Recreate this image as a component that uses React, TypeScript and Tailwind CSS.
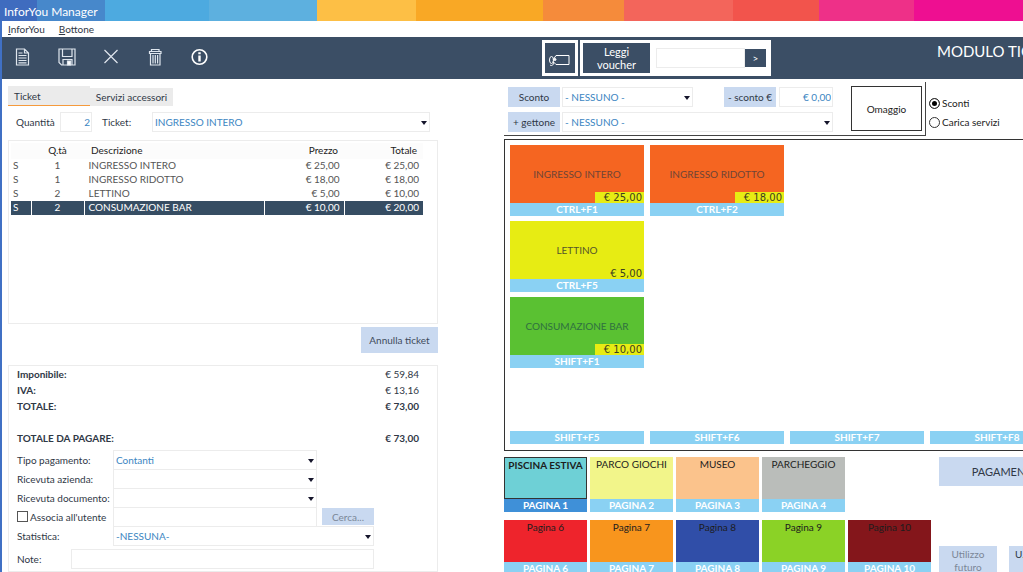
import { ReactNode } from "react";
import clsx from "clsx";

const stripes = [
    "grow-37 bg-[#3f6cbf]",
    "grow-68 bg-[#4788cb]",
    "grow-104 bg-[#4daae0]",
    "grow-108 bg-[#5db0df]",
    "grow-99 bg-[#fdbf45]",
    "grow-127 bg-[#f9a825]",
    "grow-81 bg-[#f58b3b]",
    "grow-109 bg-[#f3655b]",
    "grow-86 bg-[#f2544c]",
    "grow-95 bg-[#ee3088]",
    "grow-109 bg-[#ee0f91]",
];

const rows = [
    { qty: 1, name: "INGRESSO INTERO", price: "€ 25,00", total: "€ 25,00" },
    { qty: 1, name: "INGRESSO RIDOTTO", price: "€ 18,00", total: "€ 18,00" },
    { qty: 2, name: "LETTINO", price: "€ 5,00", total: "€ 10,00" },
    { qty: 2, name: "CONSUMAZIONE BAR", price: "€ 10,00", total: "€ 20,00", selected: true },
];

const totals = [
    { label: "Imponibile:", value: "€ 59,84" },
    { label: "IVA:", value: "€ 13,16" },
    { label: "TOTALE:", value: "€ 73,00", bold: true },
    { label: "TOTALE DA PAGARE:", value: "€ 73,00", bold: true, last: true },
];

type Tile = { name?: string; price?: string; keys: string; color?: string; text?: string };

const tiles: (Tile | null)[] = [
    { name: "INGRESSO INTERO", price: "€ 25,00", keys: "CTRL+F1", color: "bg-[#f56521]", text: "text-[#6f4436]" },
    { name: "INGRESSO RIDOTTO", price: "€ 18,00", keys: "CTRL+F2", color: "bg-[#f56521]", text: "text-[#6f4436]" },
    null,
    null,
    { name: "LETTINO", price: "€ 5,00", keys: "CTRL+F5", color: "bg-[#e7ec13]", text: "text-[#55552a]" },
    null,
    null,
    null,
    { name: "CONSUMAZIONE BAR", price: "€ 10,00", keys: "SHIFT+F1", color: "bg-[#5ac132]", text: "text-[#2f7040]" },
    null,
    null,
    null,
    { keys: "SHIFT+F5" },
    { keys: "SHIFT+F6" },
    { keys: "SHIFT+F7" },
    { keys: "SHIFT+F8" },
];

const pages = [
    [
        { name: "PISCINA ESTIVA", label: "PAGINA 1", color: "bg-[#6ed0d6]", active: true },
        { name: "PARCO GIOCHI", label: "PAGINA 2", color: "bg-[#f2f58a]" },
        { name: "MUSEO", label: "PAGINA 3", color: "bg-[#fbc38c]" },
        { name: "PARCHEGGIO", label: "PAGINA 4", color: "bg-[#babdba]" },
    ],
    [
        { name: "Pagina 6", label: "PAGINA 6", color: "bg-[#ee242c]" },
        { name: "Pagina 7", label: "PAGINA 7", color: "bg-[#f8951d]" },
        { name: "Pagina 8", label: "PAGINA 8", color: "bg-[#304ea8]" },
        { name: "Pagina 9", label: "PAGINA 9", color: "bg-[#8bd226]" },
        { name: "Pagina 10", label: "PAGINA 10", color: "bg-[#84161b]" },
    ],
];

const SelectBox = ({ id, label, value, className }: { id: string; label?: string; value?: string; className?: string }) => (
    <div className={clsx("relative h-5 border border-[#ececec]", className)}>
        <select
            id={id}
            aria-label={label}
            className="block h-full w-full appearance-none bg-transparent pl-0.5 text-[#3c86c2] outline-none"
        >
            <option>{value}</option>
        </select>
        <svg viewBox="0 0 6 4" className="pointer-events-none absolute right-0.5 top-2 h-1 w-1.5 fill-[#15152b]">
            <path d="M0 0h6L3 4z" />
        </svg>
    </div>
);

const ToolButton = ({ label, children }: { label: string; children: ReactNode }) => (
    <button aria-label={label} className="flex h-5 w-5 items-center justify-center">
        <svg viewBox="0 0 20 20" className="h-5 w-5 fill-none stroke-[#dfe6ee]" strokeWidth="1.2">
            {children}
        </svg>
    </button>
);

const Toolbar = () => (
    <div className="flex h-[42px] shrink-0 items-center bg-[#3b4e65] text-white">
        <div className="flex w-[540px] shrink-0 gap-6 pb-0.5 pl-[11px]">
            <ToolButton label="Nuovo">
                <path d="M3.500 2h8l4 4v12h-12zM11.500 2v4h4M5.500 6h4M5.500 8.500h8M5.500 11h8M5.500 13.500h8M5.500 15.800h8" />
            </ToolButton>
            <ToolButton label="Salva">
                <path d="M2 2h16v16H4.500L2 15.500zM5.500 2v7.500h9.500V2M6 18v-5.500h9V18" />
                <path d="M10.500 14h3v4h-3z" fill="#fff" />
            </ToolButton>
            <ToolButton label="Elimina">
                <path d="M3.500 3l13 13M16.500 3l-13 13" />
            </ToolButton>
            <ToolButton label="Cestino">
                <path d="M4.500 4.500h11.500v2H4.500zM6.500 4.500v-2h7.500v2M5.500 6.500v11.500h9.500V6.500M8 8v8.500M10.300 8v8.500M12.600 8v8.500" />
            </ToolButton>
            <ToolButton label="Informazioni">
                <circle cx="10.500" cy="10" r="7.300" stroke="#fff" strokeWidth="1.600" />
                <path d="M10.500 8.500v6M10.500 5.200v2" stroke="#fff" strokeWidth="2.400" />
            </ToolButton>
        </div>
        <button aria-label="Tessera" className="mr-0.5 flex h-9 w-9 shrink-0 items-center justify-center border-[3px] border-white bg-[#3b4e65]">
            <svg viewBox="0 0 24 20" className="h-5 w-6 fill-none stroke-white" strokeWidth="1">
                <path d="M8 7.500h13v9H8l-3-3M8 7.500L5 12" />
                <ellipse cx="3.500" cy="12" rx="2" ry="3.500" />
                <path d="M2 17c2 1.500 4-.5 3.500-3" />
                <circle cx="7" cy="11.500" r="1" fill="#fff" />
            </svg>
        </button>
        <div className="flex h-9 shrink-0 items-center bg-white px-[3px]">
            <button className="h-[30px] w-[67px] bg-[#3b4e65] text-[11px] leading-[13px]">
                Leggi
                <br />
                voucher
            </button>
            <input aria-label="Codice voucher" className="ml-1.5 h-5 w-[89px] border border-[#ececec]" />
            <button className="mr-0.5 h-[18px] w-[21px] bg-[#3b4e65]">&gt;</button>
        </div>
        <h1 className="ml-auto -mr-[60px] h-8 w-[146px] shrink-0 whitespace-nowrap text-[15px] leading-[18px]">MODULO TICKET</h1>
    </div>
);

const TicketTable = () => (
    <div className="mt-2 h-[184px] border border-[#ececec] px-0.5 pt-0.5">
        <table className="w-[412px] table-fixed border-collapse leading-3">
            <thead>
                <tr className="h-4 bg-[#fcfcfc] text-[#222]">
                    <th className="w-5" aria-label="Stato" />
                    <th className="w-[53px] pb-0.5 font-normal">Q.tà</th>
                    <th className="w-[180px] pb-0.5 pl-[7px] text-left font-normal">Descrizione</th>
                    <th className="w-20 pr-1.5 pb-0.5 text-right font-normal">Prezzo</th>
                    <th className="pr-1.5 pb-0.5 text-right font-normal">Totale</th>
                </tr>
            </thead>
            <tbody>
                {rows.map((row) => (
                    <tr key={row.name} className={clsx("h-3.5", row.selected ? "bg-[#364d63] text-white" : "text-[#555]")}>
                        <td className="border-r border-white pb-0.5 pl-0.5">S</td>
                        <td className="border-r border-white pb-0.5 text-center">{row.qty}</td>
                        <td className="border-r border-white pb-0.5 pl-1">{row.name}</td>
                        <td className="border-r border-white pr-1 pb-0.5 text-right">{row.price}</td>
                        <td className="pr-1 pb-0.5 text-right">{row.total}</td>
                    </tr>
                ))}
            </tbody>
        </table>
    </div>
);

const PaymentPanel = () => (
    <section className="mt-3 flex-1 border border-[#ececec] pl-2">
        <dl className="pr-[18px]">
            {totals.map((item) => (
                <div key={item.label} className={clsx("flex h-4 items-center justify-between", item.last && "mt-4")}>
                    <dt className="font-bold">{item.label}</dt>
                    <dd className={clsx(item.bold && "font-bold")}>{item.value}</dd>
                </div>
            ))}
        </dl>
        <div className="mt-1 grid auto-rows-[19px] grid-cols-[96px_204px_57px] items-center">
            <label htmlFor="payment">Tipo pagamento:</label>
            <SelectBox id="payment" value="Contanti" />
            <span />
            <label htmlFor="company">Ricevuta azienda:</label>
            <SelectBox id="company" />
            <span />
            <label htmlFor="document" className="whitespace-nowrap">Ricevuta documento:</label>
            <SelectBox id="document" />
            <span />
            <label className="flex items-center gap-0.5 whitespace-nowrap">
                <input type="checkbox" className="h-[11px] w-[11px] shrink-0 appearance-none border border-[#555]" />
                Associa all'utente
            </label>
            <input aria-label="Utente" className="h-5 border border-[#ececec]" />
            <button className="ml-[5px] h-[17px] w-[52px] bg-[#c9d9f0] text-[#7b8797]">Cerca...</button>
            <label htmlFor="stats">Statistica:</label>
            <SelectBox id="stats" value="-NESSUNA-" className="col-span-2" />
        </div>
        <div className="mt-1 flex items-center">
            <label htmlFor="notes" className="w-[54px]">Note:</label>
            <input id="notes" className="h-5 w-[303px] border border-[#ececec]" />
        </div>
    </section>
);

const TicketColumn = () => (
    <section className="flex w-[430px] shrink-0 flex-col pt-[7px]">
        <div role="tablist" className="flex h-5 items-end">
            <button role="tab" aria-selected="true" className="h-5 w-[82px] border-b border-b-[#f59a3c] bg-[#ebebeb] pl-1.5 text-left">
                Ticket
            </button>
            <button role="tab" aria-selected="false" className="h-[18px] w-[83px] bg-[#ebebeb]">
                Servizi accessori
            </button>
        </div>
        <div className="mt-1.5 flex items-center">
            <label htmlFor="qty" className="w-[52px] pl-2">Quantità</label>
            <input id="qty" defaultValue="2" className="h-5 w-8 border border-[#ececec] pr-px text-right text-[#3c86c2]" />
            <label htmlFor="ticket" className="w-[60px] pl-2.5">Ticket:</label>
            <SelectBox id="ticket" value="INGRESSO INTERO" className="w-[278px]" />
        </div>
        <TicketTable />
        <button className="mt-[3px] h-[26px] w-[77px] self-end bg-[#c9d9f0] text-[#3f4b5c]">Annulla ticket</button>
        <PaymentPanel />
    </section>
);

const DiscountBar = () => (
    <div className="flex">
        <div className="mt-[3px] flex h-[54px] w-[422px] shrink-0 justify-between border-r border-b border-[#444] pt-1 pr-[3px] pl-1">
            <div className="mt-px flex flex-col gap-[5px]">
                <div className="flex">
                    <button className="h-5 w-[52px] bg-[#c9d9f0]">Sconto</button>
                    <SelectBox id="discount" label="Sconto" value="- NESSUNO -" className="ml-0.5 w-[131px]" />
                    <button className="ml-[31px] h-5 w-[52px] bg-[#c9d9f0]">- sconto €</button>
                    <input aria-label="Sconto in euro" defaultValue="€ 0,00" className="ml-[3px] h-5 w-[54px] border border-[#ececec] pr-px text-right text-[#3c86c2]" />
                </div>
                <div className="flex">
                    <button className="h-5 w-[52px] bg-[#c9d9f0]">+ gettone</button>
                    <SelectBox id="token" label="Gettone" value="- NESSUNO -" className="ml-0.5 w-[271px]" />
                </div>
            </div>
            <button className="h-[45px] w-[71px] border border-[#333] text-[#222]">Omaggio</button>
        </div>
        <fieldset className="flex flex-col gap-[3px] pt-4 pl-[3px] text-[#222]">
            {["Sconti", "Carica servizi"].map((name, i) => (
                <label key={name} className="flex h-4 items-center gap-0.5 whitespace-nowrap">
                    <input
                        type="radio"
                        name="mode"
                        defaultChecked={i === 0}
                        className="h-[11px] w-[11px] appearance-none rounded-full border border-[#333] checked:bg-black checked:shadow-[inset_0_0_0_2px_white]"
                    />
                    {name}
                </label>
            ))}
        </fieldset>
    </div>
);

const TileGrid = () => (
    <div className="mt-[3px] grid w-[700px] grid-cols-[repeat(4,134px)] auto-rows-[71px] gap-x-1.5 gap-y-[5px] border border-[#333] p-[5px] pb-1.5">
        {tiles.map((tile, i) =>
            tile ? (
                <button key={i} className="flex flex-col">
                    <span className={clsx("relative flex h-[58px] w-full items-center justify-center", tile.color, tile.text)}>
                        {tile.name}
                        {tile.price && (
                            <span className="absolute right-0 bottom-0 h-[11px] w-[49px] bg-[#e7ec13] pr-0.5 text-right font-['DejaVu_Sans'] text-[10px] leading-3 text-[#3d3d20]">
                                {tile.price}
                            </span>
                        )}
                    </span>
                    <span className="h-[13px] w-full bg-[#8ad1f3] leading-[13px] font-bold text-white">{tile.keys}</span>
                </button>
            ) : (
                <span key={i} />
            )
        )}
    </div>
);

const PageButtons = () => (
    <div className="flex w-[435px] shrink-0 flex-col gap-2">
        {pages.map((group, i) => (
            <div key={i} className="flex gap-[3px]">
                {group.map((page) => (
                    <button key={page.label} className="w-[83px] whitespace-nowrap">
                        <span
                            className={clsx(
                                "block h-[42px] text-[#1d1d1d]",
                                page.color,
                                page.active && "border border-[#333] font-bold"
                            )}
                        >
                            {page.name}
                        </span>
                        <span
                            className={clsx(
                                "block h-[13px] leading-[13px] font-bold text-white",
                                page.active ? "bg-[#3f90d8]" : "bg-[#8ad1f3]"
                            )}
                        >
                            {page.label}
                        </span>
                    </button>
                ))}
            </div>
        ))}
    </div>
);

const App = () => (
    <div className="flex h-screen flex-col overflow-hidden bg-white font-[Lato,sans-serif] text-[10px] leading-[14px] text-[#2f3846]">
        <header className="relative flex h-[21px] shrink-0">
            {stripes.map((stripe) => (
                <span key={stripe} className={stripe} />
            ))}
            <span className="absolute top-1 left-1 text-xs leading-4 text-white">InforYou Manager</span>
        </header>
        <div className="flex min-h-0 flex-1 flex-col border-l-2 border-[#4070c4]">
            <nav className="flex h-4 shrink-0 gap-3.5 pl-1.5 leading-4">
                <a href="#inforyou"><u>I</u>nforYou</a>
                <a href="#bottone"><u>B</u>ottone</a>
            </nav>
            <Toolbar />
            <main className="flex min-h-0 flex-1 pl-1.5">
                <TicketColumn />
                <section className="ml-[66px] min-w-0 flex-1">
                    <DiscountBar />
                    <TileGrid />
                    <div className="mt-1.5 flex">
                        <PageButtons />
                        <div className="flex flex-col gap-[60px]">
                            <button className="h-[29px] w-[134px] bg-[#c9d9f0] text-[11px]">PAGAMENTO</button>
                            <div className="flex gap-3">
                                <button className="h-[29px] w-[58px] bg-[#c9d9f0] leading-[13px] text-[#7b8797]">
                                    Utilizzo
                                    <br />
                                    futuro
                                </button>
                                <button className="h-[29px] w-[58px] shrink-0 bg-[#c9d9f0] pb-3 pl-1.5 text-left leading-[13px]">U.</button>
                            </div>
                        </div>
                    </div>
                </section>
            </main>
        </div>
    </div>
);

export default App;
